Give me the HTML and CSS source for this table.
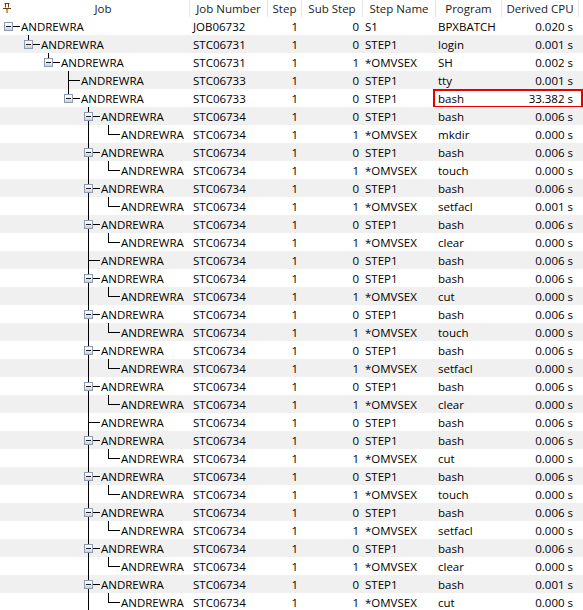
FILE: index.html
```html
<!DOCTYPE html>
<html>
<head>
<meta charset="utf-8">
<link rel="stylesheet" href="styles.css">
</head>
<body>
<div class="table">
  <div class="hdr">
    <div class="h hjob"><span class="pin"><svg width="8" height="10" viewBox="0 0 8 10"><path d="M1.5 0.5H6.5M2.5 0.5V4.5M5.5 0.5V4.5M0 5.5H8M4 5.5V10" stroke="#7a3d00" stroke-width="1" fill="none"/></svg></span><span class="ht">Job</span></div>
    <div class="h">Job Number</div>
    <div class="h">Step</div>
    <div class="h">Sub Step</div>
    <div class="h">Step Name</div>
    <div class="h">Program</div>
    <div class="h">Derived CPU</div>
    <div class="h last"></div>
  </div>

  <div class="row"><div class="c job"><span class="s hz"><i class="bx"></i></span><span class="t">ANDREWRA</span></div><div class="c num">JOB06732</div><div class="c r">1</div><div class="c r">0</div><div class="c">S1</div><div class="c">BPXBATCH</div><div class="c r cpu">0.020 s</div><div class="c"></div></div>
  <div class="row alt"><div class="c job"><span class="s"></span><span class="s vt hz"><i class="bx"></i></span><span class="t">ANDREWRA</span></div><div class="c num">STC06731</div><div class="c r">1</div><div class="c r">0</div><div class="c">STEP1</div><div class="c">login</div><div class="c r cpu">0.001 s</div><div class="c"></div></div>
  <div class="row"><div class="c job"><span class="s"></span><span class="s"></span><span class="s vt hz"><i class="bx"></i></span><span class="t">ANDREWRA</span></div><div class="c num">STC06731</div><div class="c r">1</div><div class="c r">1</div><div class="c">*OMVSEX</div><div class="c">SH</div><div class="c r cpu">0.002 s</div><div class="c"></div></div>
  <div class="row alt"><div class="c job"><span class="s"></span><span class="s"></span><span class="s"></span><span class="s vf hz"></span><span class="t">ANDREWRA</span></div><div class="c num">STC06733</div><div class="c r">1</div><div class="c r">0</div><div class="c">STEP1</div><div class="c">tty</div><div class="c r cpu">0.001 s</div><div class="c"></div></div>
  <div class="row"><div class="c job"><span class="s"></span><span class="s"></span><span class="s"></span><span class="s vt hz"><i class="bx"></i></span><span class="t">ANDREWRA</span></div><div class="c num">STC06733</div><div class="c r">1</div><div class="c r">0</div><div class="c">STEP1</div><div class="c">bash</div><div class="c r cpu">33.382 s</div><div class="c"></div><span class="hl"></span></div>

  <div class="row alt"><div class="c job"><span class="s"></span><span class="s"></span><span class="s"></span><span class="s"></span><span class="s vf hz"><i class="bx"></i></span><span class="t">ANDREWRA</span></div><div class="c num">STC06734</div><div class="c r">1</div><div class="c r">0</div><div class="c">STEP1</div><div class="c">bash</div><div class="c r cpu">0.006 s</div><div class="c"></div></div>
  <div class="row"><div class="c job"><span class="s"></span><span class="s"></span><span class="s"></span><span class="s"></span><span class="s vf"></span><span class="s vt hz"></span><span class="t">ANDREWRA</span></div><div class="c num">STC06734</div><div class="c r">1</div><div class="c r">1</div><div class="c">*OMVSEX</div><div class="c">mkdir</div><div class="c r cpu">0.000 s</div><div class="c"></div></div>
  <div class="row alt"><div class="c job"><span class="s"></span><span class="s"></span><span class="s"></span><span class="s"></span><span class="s vf hz"><i class="bx"></i></span><span class="t">ANDREWRA</span></div><div class="c num">STC06734</div><div class="c r">1</div><div class="c r">0</div><div class="c">STEP1</div><div class="c">bash</div><div class="c r cpu">0.006 s</div><div class="c"></div></div>
  <div class="row"><div class="c job"><span class="s"></span><span class="s"></span><span class="s"></span><span class="s"></span><span class="s vf"></span><span class="s vt hz"></span><span class="t">ANDREWRA</span></div><div class="c num">STC06734</div><div class="c r">1</div><div class="c r">1</div><div class="c">*OMVSEX</div><div class="c">touch</div><div class="c r cpu">0.000 s</div><div class="c"></div></div>
  <div class="row alt"><div class="c job"><span class="s"></span><span class="s"></span><span class="s"></span><span class="s"></span><span class="s vf hz"><i class="bx"></i></span><span class="t">ANDREWRA</span></div><div class="c num">STC06734</div><div class="c r">1</div><div class="c r">0</div><div class="c">STEP1</div><div class="c">bash</div><div class="c r cpu">0.006 s</div><div class="c"></div></div>
  <div class="row"><div class="c job"><span class="s"></span><span class="s"></span><span class="s"></span><span class="s"></span><span class="s vf"></span><span class="s vt hz"></span><span class="t">ANDREWRA</span></div><div class="c num">STC06734</div><div class="c r">1</div><div class="c r">1</div><div class="c">*OMVSEX</div><div class="c">setfacl</div><div class="c r cpu">0.001 s</div><div class="c"></div></div>
  <div class="row alt"><div class="c job"><span class="s"></span><span class="s"></span><span class="s"></span><span class="s"></span><span class="s vf hz"><i class="bx"></i></span><span class="t">ANDREWRA</span></div><div class="c num">STC06734</div><div class="c r">1</div><div class="c r">0</div><div class="c">STEP1</div><div class="c">bash</div><div class="c r cpu">0.006 s</div><div class="c"></div></div>
  <div class="row"><div class="c job"><span class="s"></span><span class="s"></span><span class="s"></span><span class="s"></span><span class="s vf"></span><span class="s vt hz"></span><span class="t">ANDREWRA</span></div><div class="c num">STC06734</div><div class="c r">1</div><div class="c r">1</div><div class="c">*OMVSEX</div><div class="c">clear</div><div class="c r cpu">0.000 s</div><div class="c"></div></div>
  <div class="row alt"><div class="c job"><span class="s"></span><span class="s"></span><span class="s"></span><span class="s"></span><span class="s vf hz"></span><span class="t">ANDREWRA</span></div><div class="c num">STC06734</div><div class="c r">1</div><div class="c r">0</div><div class="c">STEP1</div><div class="c">bash</div><div class="c r cpu">0.006 s</div><div class="c"></div></div>
  <div class="row"><div class="c job"><span class="s"></span><span class="s"></span><span class="s"></span><span class="s"></span><span class="s vf hz"><i class="bx"></i></span><span class="t">ANDREWRA</span></div><div class="c num">STC06734</div><div class="c r">1</div><div class="c r">0</div><div class="c">STEP1</div><div class="c">bash</div><div class="c r cpu">0.006 s</div><div class="c"></div></div>
  <div class="row alt"><div class="c job"><span class="s"></span><span class="s"></span><span class="s"></span><span class="s"></span><span class="s vf"></span><span class="s vt hz"></span><span class="t">ANDREWRA</span></div><div class="c num">STC06734</div><div class="c r">1</div><div class="c r">1</div><div class="c">*OMVSEX</div><div class="c">cut</div><div class="c r cpu">0.000 s</div><div class="c"></div></div>
  <div class="row"><div class="c job"><span class="s"></span><span class="s"></span><span class="s"></span><span class="s"></span><span class="s vf hz"><i class="bx"></i></span><span class="t">ANDREWRA</span></div><div class="c num">STC06734</div><div class="c r">1</div><div class="c r">0</div><div class="c">STEP1</div><div class="c">bash</div><div class="c r cpu">0.006 s</div><div class="c"></div></div>
  <div class="row alt"><div class="c job"><span class="s"></span><span class="s"></span><span class="s"></span><span class="s"></span><span class="s vf"></span><span class="s vt hz"></span><span class="t">ANDREWRA</span></div><div class="c num">STC06734</div><div class="c r">1</div><div class="c r">1</div><div class="c">*OMVSEX</div><div class="c">touch</div><div class="c r cpu">0.000 s</div><div class="c"></div></div>
  <div class="row"><div class="c job"><span class="s"></span><span class="s"></span><span class="s"></span><span class="s"></span><span class="s vf hz"><i class="bx"></i></span><span class="t">ANDREWRA</span></div><div class="c num">STC06734</div><div class="c r">1</div><div class="c r">0</div><div class="c">STEP1</div><div class="c">bash</div><div class="c r cpu">0.006 s</div><div class="c"></div></div>
  <div class="row alt"><div class="c job"><span class="s"></span><span class="s"></span><span class="s"></span><span class="s"></span><span class="s vf"></span><span class="s vt hz"></span><span class="t">ANDREWRA</span></div><div class="c num">STC06734</div><div class="c r">1</div><div class="c r">1</div><div class="c">*OMVSEX</div><div class="c">setfacl</div><div class="c r cpu">0.000 s</div><div class="c"></div></div>
  <div class="row"><div class="c job"><span class="s"></span><span class="s"></span><span class="s"></span><span class="s"></span><span class="s vf hz"><i class="bx"></i></span><span class="t">ANDREWRA</span></div><div class="c num">STC06734</div><div class="c r">1</div><div class="c r">0</div><div class="c">STEP1</div><div class="c">bash</div><div class="c r cpu">0.006 s</div><div class="c"></div></div>
  <div class="row alt"><div class="c job"><span class="s"></span><span class="s"></span><span class="s"></span><span class="s"></span><span class="s vf"></span><span class="s vt hz"></span><span class="t">ANDREWRA</span></div><div class="c num">STC06734</div><div class="c r">1</div><div class="c r">1</div><div class="c">*OMVSEX</div><div class="c">clear</div><div class="c r cpu">0.000 s</div><div class="c"></div></div>
  <div class="row"><div class="c job"><span class="s"></span><span class="s"></span><span class="s"></span><span class="s"></span><span class="s vf hz"></span><span class="t">ANDREWRA</span></div><div class="c num">STC06734</div><div class="c r">1</div><div class="c r">0</div><div class="c">STEP1</div><div class="c">bash</div><div class="c r cpu">0.006 s</div><div class="c"></div></div>
  <div class="row alt"><div class="c job"><span class="s"></span><span class="s"></span><span class="s"></span><span class="s"></span><span class="s vf hz"><i class="bx"></i></span><span class="t">ANDREWRA</span></div><div class="c num">STC06734</div><div class="c r">1</div><div class="c r">0</div><div class="c">STEP1</div><div class="c">bash</div><div class="c r cpu">0.006 s</div><div class="c"></div></div>
  <div class="row"><div class="c job"><span class="s"></span><span class="s"></span><span class="s"></span><span class="s"></span><span class="s vf"></span><span class="s vt hz"></span><span class="t">ANDREWRA</span></div><div class="c num">STC06734</div><div class="c r">1</div><div class="c r">1</div><div class="c">*OMVSEX</div><div class="c">cut</div><div class="c r cpu">0.000 s</div><div class="c"></div></div>
  <div class="row alt"><div class="c job"><span class="s"></span><span class="s"></span><span class="s"></span><span class="s"></span><span class="s vf hz"><i class="bx"></i></span><span class="t">ANDREWRA</span></div><div class="c num">STC06734</div><div class="c r">1</div><div class="c r">0</div><div class="c">STEP1</div><div class="c">bash</div><div class="c r cpu">0.006 s</div><div class="c"></div></div>
  <div class="row"><div class="c job"><span class="s"></span><span class="s"></span><span class="s"></span><span class="s"></span><span class="s vf"></span><span class="s vt hz"></span><span class="t">ANDREWRA</span></div><div class="c num">STC06734</div><div class="c r">1</div><div class="c r">1</div><div class="c">*OMVSEX</div><div class="c">touch</div><div class="c r cpu">0.000 s</div><div class="c"></div></div>
  <div class="row alt"><div class="c job"><span class="s"></span><span class="s"></span><span class="s"></span><span class="s"></span><span class="s vf hz"><i class="bx"></i></span><span class="t">ANDREWRA</span></div><div class="c num">STC06734</div><div class="c r">1</div><div class="c r">0</div><div class="c">STEP1</div><div class="c">bash</div><div class="c r cpu">0.006 s</div><div class="c"></div></div>
  <div class="row"><div class="c job"><span class="s"></span><span class="s"></span><span class="s"></span><span class="s"></span><span class="s vf"></span><span class="s vt hz"></span><span class="t">ANDREWRA</span></div><div class="c num">STC06734</div><div class="c r">1</div><div class="c r">1</div><div class="c">*OMVSEX</div><div class="c">setfacl</div><div class="c r cpu">0.000 s</div><div class="c"></div></div>
  <div class="row alt"><div class="c job"><span class="s"></span><span class="s"></span><span class="s"></span><span class="s"></span><span class="s vf hz"><i class="bx"></i></span><span class="t">ANDREWRA</span></div><div class="c num">STC06734</div><div class="c r">1</div><div class="c r">0</div><div class="c">STEP1</div><div class="c">bash</div><div class="c r cpu">0.006 s</div><div class="c"></div></div>
  <div class="row"><div class="c job"><span class="s"></span><span class="s"></span><span class="s"></span><span class="s"></span><span class="s vf"></span><span class="s vt hz"></span><span class="t">ANDREWRA</span></div><div class="c num">STC06734</div><div class="c r">1</div><div class="c r">1</div><div class="c">*OMVSEX</div><div class="c">clear</div><div class="c r cpu">0.000 s</div><div class="c"></div></div>
  <div class="row alt"><div class="c job"><span class="s"></span><span class="s"></span><span class="s"></span><span class="s"></span><span class="s vf hz"><i class="bx"></i></span><span class="t">ANDREWRA</span></div><div class="c num">STC06734</div><div class="c r">1</div><div class="c r">0</div><div class="c">STEP1</div><div class="c">bash</div><div class="c r cpu">0.001 s</div><div class="c"></div></div>
  <div class="row"><div class="c job"><span class="s"></span><span class="s"></span><span class="s"></span><span class="s"></span><span class="s vf"></span><span class="s vt hz"></span><span class="t">ANDREWRA</span></div><div class="c num">STC06734</div><div class="c r">1</div><div class="c r">1</div><div class="c">*OMVSEX</div><div class="c">cut</div><div class="c r cpu">0.000 s</div><div class="c"></div></div>
</div>
</body>
</html>
```

FILE: styles.css
```css
html, body {
  margin: 0;
  padding: 0;
  background: #fff;
}
body {
  width: 583px;
  height: 610px;
  overflow: hidden;
  font-family: "Open Sans", "Noto Sans", sans-serif;
  font-size: 11.5px;
  color: #000;
}
.table {
  display: flex;
  flex-direction: column;
}
.hdr, .row {
  display: grid;
  grid-template-columns: 190px 78px 34px 61px 73px 66px 77px 4px;
}
.hdr {
  height: 17px;
  line-height: 17px;
  color: #1b1b1b;
}
.h {
  box-sizing: border-box;
  border-right: 1px solid #e5e5e5;
  text-align: center;
  white-space: nowrap;
  overflow: hidden;
}
.h.last {
  border-right: none;
}
.hjob {
  display: flex;
}
.pin {
  width: 17px;
  flex: none;
  display: flex;
  padding: 3px 0 0 3px;
  box-sizing: border-box;
}
.pin svg {
  display: block;
}
.ht {
  flex: 1;
  text-align: center;
}
.row {
  position: relative;
  height: 18px;
}
.row.alt {
  background: #f0f0f0;
}
.c {
  box-sizing: border-box;
  height: 18px;
  white-space: nowrap;
  overflow: hidden;
  padding-left: 2px;
  padding-top: 1px;
  line-height: 17px;
}
.c.r {
  text-align: right;
  padding-left: 0;
  padding-right: 4px;
}
.c.cpu {
  padding-right: 6px;
}
.c.num {
  padding-left: 3px;
}
.c.job {
  display: flex;
  padding-left: 0;
  padding-top: 0;
}
.t {
  padding-left: 1px;
  padding-top: 1px;
  line-height: 17px;
}
.s {
  position: relative;
  flex: none;
  width: 20px;
  height: 18px;
}
.s.vf::before,
.s.vt::before {
  content: "";
  position: absolute;
  left: 8px;
  top: 0;
  width: 1px;
  background: #000;
}
.s.vf::before {
  height: 18px;
}
.s.vt::before {
  height: 10px;
}
.s.hz::after {
  content: "";
  position: absolute;
  left: 8px;
  right: 0;
  top: 9px;
  height: 1px;
  background: #000;
}
.bx {
  position: absolute;
  left: 4px;
  top: 5px;
  width: 9px;
  height: 9px;
  box-sizing: border-box;
  border: 1px solid #8a9bb3;
  background: linear-gradient(#ffffff, #f0f0f0 45%, #d2d2d2);
  z-index: 1;
}
.bx::before {
  content: "";
  position: absolute;
  left: 1px;
  top: 3px;
  width: 5px;
  height: 1px;
  background: #1f1f1f;
}
.hl {
  position: absolute;
  left: 433px;
  top: 0;
  width: 150px;
  height: 19px;
  box-sizing: border-box;
  border: 2px solid #e60000;
  pointer-events: none;
}
```
